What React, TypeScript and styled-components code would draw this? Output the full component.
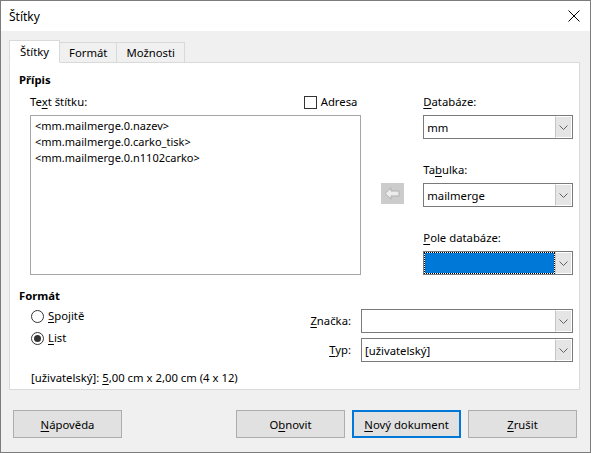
import React from "react";
import styled, { createGlobalStyle } from "styled-components";

const Global = createGlobalStyle`
  html, body { margin: 0; padding: 0; background: #ffffff; }
  * { box-sizing: border-box; }
  body { font-family: "Noto Sans", "Segoe UI", sans-serif; font-size: 11.3px; color: #000; }
`;

const Window = styled.div`
  width: 591px;
  height: 453px;
  border: 1px solid #7c7c7c;
  background: #f0f0f0;
  display: flex;
  flex-direction: column;
  overflow: hidden;
`;

const TitleBar = styled.div`
  height: 30px;
  background: #ffffff;
  display: flex;
  align-items: center;
  justify-content: space-between;
  padding: 0 9px 0 8px;
  font-size: 12px;
`;

const CloseBtn = styled.div`
  width: 12px;
  height: 12px;
  display: flex;
  margin-right: 1px;
`;

const Body = styled.div`
  flex: 1;
  display: flex;
  flex-direction: column;
  padding: 9px 10px 0 8px;
`;

const TabRow = styled.div`
  display: flex;
  align-items: flex-end;
  height: 23px;
  position: relative;
  z-index: 1;
  margin-bottom: -1px;
`;

const Tab = styled.div<{ $active?: boolean }>`
  height: ${(p) => (p.$active ? "23px" : "21px")};
  padding: 0 ${(p) => (p.$active ? "10px" : "9px")};
  border: 1px solid #d9d9d9;
  border-bottom: ${(p) => (p.$active ? "1px solid #ffffff" : "1px solid #d9d9d9")};
  border-left-width: ${(p) => (p.$active ? "1px" : "0")};
  background: ${(p) => (p.$active ? "#ffffff" : "#f0f0f0")};
  display: flex;
  align-items: center;
  line-height: 16px;
`;

const Panel = styled.div`
  height: 328px;
  width: 571px;
  background: #ffffff;
  border: 1px solid #d9d9d9;
  padding: 9px 6px 0 9px;
  display: flex;
  flex-direction: column;
`;

const Heading = styled.div`
  font-weight: 700;
  line-height: 16px;
  height: 16px;
`;

const TopRow = styled.div`
  display: flex;
  margin-top: 6px;
  padding-left: 11px;
`;

const LeftCol = styled.div`
  width: 332px;
  display: flex;
  flex-direction: column;
`;

const LabelRow = styled.div`
  display: flex;
  justify-content: space-between;
  align-items: center;
  height: 16px;
  line-height: 16px;
`;

const Label = styled.div`
  line-height: 16px;
  height: 16px;
  white-space: nowrap;
`;

const U = styled.span`
  text-decoration: underline;
  text-underline-offset: 2px;
`;

const CheckWrap = styled.div`
  display: flex;
  align-items: center;
  gap: 4px;
  padding-right: 4px;
`;

const CheckBox = styled.div`
  width: 13px;
  height: 13px;
  border: 1px solid #333333;
  background: #ffffff;
`;

const TextArea = styled.div`
  margin-top: 5px;
  height: 160px;
  border: 1px solid #a5a5a5;
  padding: 2px 4px;
  line-height: 16px;
  font-size: 11px;
`;

const MidCol = styled.div`
  width: 62px;
  display: flex;
  justify-content: center;
  padding-top: 89px;
`;

const ArrowBtn = styled.div`
  width: 23px;
  height: 21px;
  background: #cccccc;
  display: flex;
  align-items: center;
  justify-content: center;
`;

const RightCol = styled.div`
  width: 150px;
  display: flex;
  flex-direction: column;
  gap: 23px;
`;

const FieldGroup = styled.div`
  display: flex;
  flex-direction: column;
  gap: 5px;
`;

const Combo = styled.div`
  width: 100%;
  height: 24px;
  border: 1px solid #7a7a7a;
  background: #ffffff;
  display: flex;
`;

const ComboValue = styled.div<{ $focus?: boolean }>`
  flex: 1;
  display: flex;
  align-items: center;
  padding-left: 3px;
  white-space: nowrap;
  ${(p) =>
    p.$focus
      ? `background: #0078d7; background-clip: padding-box; border: 1px dotted #000;`
      : ""}
`;

const ComboArrow = styled.div`
  width: 17px;
  background: #e5e5e5;
  border: 1px solid #ffffff;
  border-left: 1px solid #c5c5c5;
  display: flex;
  align-items: center;
  justify-content: center;
`;

const FormatHead = styled(Heading)`
  margin-top: 13px;
`;

const FormatRow = styled.div`
  display: flex;
  justify-content: space-between;
`;

const Radios = styled.div`
  display: flex;
  flex-direction: column;
  gap: 6px;
  padding: 4px 0 0 12px;
`;

const RadioItem = styled.div`
  display: flex;
  align-items: center;
  gap: 4px;
  height: 16px;
  line-height: 16px;
`;

const Radio = styled.div<{ $on?: boolean }>`
  width: 13px;
  height: 13px;
  border-radius: 50%;
  border: 1px solid #333333;
  display: flex;
  align-items: center;
  justify-content: center;
  &::after {
    content: "";
    display: ${(p) => (p.$on ? "block" : "none")};
    width: 7px;
    height: 7px;
    border-radius: 50%;
    background: #333333;
  }
`;

const FormGrid = styled.div`
  display: grid;
  grid-template-columns: auto 212px;
  column-gap: 10px;
  row-gap: 5px;
  align-items: center;
  margin-top: 5px;
`;

const RightLabel = styled(Label)`
  text-align: right;
`;

const Info = styled.div`
  margin-top: 8px;
  padding-left: 12px;
  line-height: 16px;
`;

const Footer = styled.div`
  display: flex;
  gap: 7px;
  padding: 20px 3px 0 4px;
`;

const Button = styled.div<{ $focus?: boolean }>`
  width: 109px;
  height: 28px;
  background: #e1e1e1;
  border: ${(p) => (p.$focus ? "2px solid #0078d7" : "1px solid #adadad")};
  display: flex;
  align-items: center;
  justify-content: center;
  white-space: nowrap;
`;

const Spacer = styled.div`
  flex: 1;
`;

const Chevron = () => (
  <svg width="9" height="5" viewBox="0 0 9 5">
    <path d="M0.5 0.5 L4.5 4.5 L8.5 0.5" fill="none" stroke="#606060" strokeWidth="1" />
  </svg>
);

const ComboBox = ({ value, focus }: { value?: string; focus?: boolean }) => (
  <Combo>
    <ComboValue $focus={focus}>{value}</ComboValue>
    <ComboArrow>
      <Chevron />
    </ComboArrow>
  </Combo>
);

export default function App() {
  return (
    <>
      <Global />
      <Window>
        <TitleBar>
          <span>Štítky</span>
          <CloseBtn>
            <svg width="12" height="12" viewBox="0 0 12 12">
              <path d="M0.5 0.5 L11.5 11.5 M11.5 0.5 L0.5 11.5" stroke="#000" strokeWidth="1" fill="none" />
            </svg>
          </CloseBtn>
        </TitleBar>
        <Body>
          <TabRow>
            <Tab $active>Štítky</Tab>
            <Tab>Formát</Tab>
            <Tab>Možnosti</Tab>
          </TabRow>
          <Panel>
            <Heading>Přípis</Heading>
            <TopRow>
              <LeftCol>
                <LabelRow>
                  <Label>
                    Te<U>x</U>t štítku:
                  </Label>
                  <CheckWrap>
                    <CheckBox />
                    <span>Adresa</span>
                  </CheckWrap>
                </LabelRow>
                <TextArea>
                  <div>&lt;mm.mailmerge.0.nazev&gt;</div>
                  <div>&lt;mm.mailmerge.0.carko_tisk&gt;</div>
                  <div>&lt;mm.mailmerge.0.n1102carko&gt;</div>
                </TextArea>
              </LeftCol>
              <MidCol>
                <ArrowBtn>
                  <svg width="16" height="13" viewBox="0 0 16 13">
                    <path d="M1 6.5 L7 0.8 L7 4 L15 4 L15 9 L7 9 L7 12.2 Z" fill="#ececec" stroke="#b0b0b0" strokeWidth="1" />
                  </svg>
                </ArrowBtn>
              </MidCol>
              <RightCol>
                <FieldGroup>
                  <Label>
                    <U>D</U>atabáze:
                  </Label>
                  <ComboBox value="mm" />
                </FieldGroup>
                <FieldGroup>
                  <Label>
                    Ta<U>b</U>ulka:
                  </Label>
                  <ComboBox value="mailmerge" />
                </FieldGroup>
                <FieldGroup>
                  <Label>
                    <U>P</U>ole databáze:
                  </Label>
                  <ComboBox focus />
                </FieldGroup>
              </RightCol>
            </TopRow>
            <FormatHead>Formát</FormatHead>
            <FormatRow>
              <Radios>
                <RadioItem>
                  <Radio />
                  <span>
                    <U>S</U>pojitě
                  </span>
                </RadioItem>
                <RadioItem>
                  <Radio $on />
                  <span>
                    <U>L</U>ist
                  </span>
                </RadioItem>
              </Radios>
              <FormGrid>
                <RightLabel>
                  <U>Z</U>načka:
                </RightLabel>
                <ComboBox />
                <RightLabel>
                  <U>T</U>yp:
                </RightLabel>
                <ComboBox value="[uživatelský]" />
              </FormGrid>
            </FormatRow>
            <Info>
              [uživatelský]: <U>5</U>,00 cm x 2,00 cm (4 x 12)
            </Info>
          </Panel>
          <Footer>
            <Button>
              <span>
                <U>N</U>ápověda
              </span>
            </Button>
            <Spacer />
            <Button>
              <span>
                O<U>b</U>novit
              </span>
            </Button>
            <Button $focus>
              <span>
                <U>N</U>ový dokument
              </span>
            </Button>
            <Button>
              <span>
                <U>Z</U>rušit
              </span>
            </Button>
          </Footer>
        </Body>
      </Window>
    </>
  );
}
